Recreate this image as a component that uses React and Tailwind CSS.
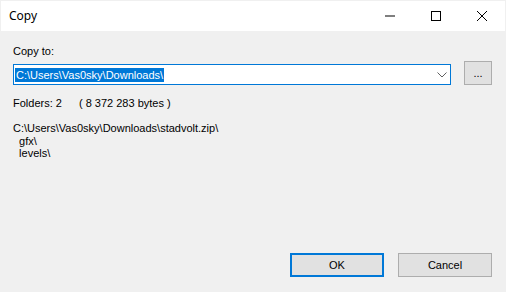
import React from "react";

export default function App() {
  return (
    <div
      className="w-[506px] h-[292px] bg-[#f0f0f0] p-px flex flex-col text-black"
      style={{ fontFamily: '"Liberation Sans", Arial, sans-serif' }}
    >
      <div className="h-[30px] bg-white flex items-center shrink-0">
        <span
          className="ml-[8px] text-[12px] leading-[16px]"
          style={{ fontFamily: '"Noto Sans", "Open Sans", sans-serif' }}
        >
          Copy
        </span>
        <div className="ml-auto flex h-full">
          <div className="w-[46px] h-full flex items-center justify-center">
            <svg width="10" height="10" viewBox="0 0 10 10">
              <rect x="0" y="4.5" width="10" height="1" fill="#000" />
            </svg>
          </div>
          <div className="w-[46px] h-full flex items-center justify-center">
            <svg width="10" height="10" viewBox="0 0 10 10">
              <rect x="0.5" y="0.5" width="9" height="9" fill="none" stroke="#000" strokeWidth="1" />
            </svg>
          </div>
          <div className="w-[46px] h-full flex items-center justify-center">
            <svg width="10" height="10" viewBox="0 0 10 10">
              <path d="M0 0 L10 10 M10 0 L0 10" stroke="#000" strokeWidth="1" />
            </svg>
          </div>
        </div>
      </div>

      <div className="flex-1 flex flex-col pl-[12px] pr-[13px] pb-[14px] text-[11px]">
        <div className="mt-[14px] leading-[13px]">Copy to:</div>
        <div className="mt-[3px] flex items-end">
          <div className="w-[438px] h-[21px] border border-[#0078d7] bg-white flex items-center">
            <span className="ml-px h-[14px] leading-[14px] px-px bg-[#0078d7] text-white">
              C:\Users\Vas0sky\Downloads\
            </span>
            <svg className="ml-auto mr-[3px]" width="10" height="6" viewBox="0 0 10 6">
              <path d="M0.5 0.5 L5 5 L9.5 0.5" fill="none" stroke="#606060" strokeWidth="1" />
            </svg>
          </div>
          <div className="ml-[13px] w-[28px] h-[24px] border border-[#adadad] bg-[#e1e1e1] flex items-center justify-center leading-[13px]">
            ...
          </div>
        </div>
        <div className="mt-[12px] leading-[13px] whitespace-pre">
          <span>Folders: 2</span>
          <span className="ml-[17px]">( 8 372 283 bytes )</span>
        </div>
        <div className="mt-[12px] leading-[12.5px] whitespace-pre">
          <div>C:\Users\Vas0sky\Downloads\stadvolt.zip\</div>
          <div>{"  gfx\\"}</div>
          <div>{"  levels\\"}</div>
        </div>
        <div className="flex-1" />
        <div className="flex justify-end gap-[14px]">
          <div className="w-[94px] h-[24px] border-2 border-[#0078d7] bg-[#e1e1e1] flex items-center justify-center leading-[13px]">
            OK
          </div>
          <div className="w-[94px] h-[24px] border border-[#adadad] bg-[#e1e1e1] flex items-center justify-center leading-[13px]">
            Cancel
          </div>
        </div>
      </div>
    </div>
  );
}
